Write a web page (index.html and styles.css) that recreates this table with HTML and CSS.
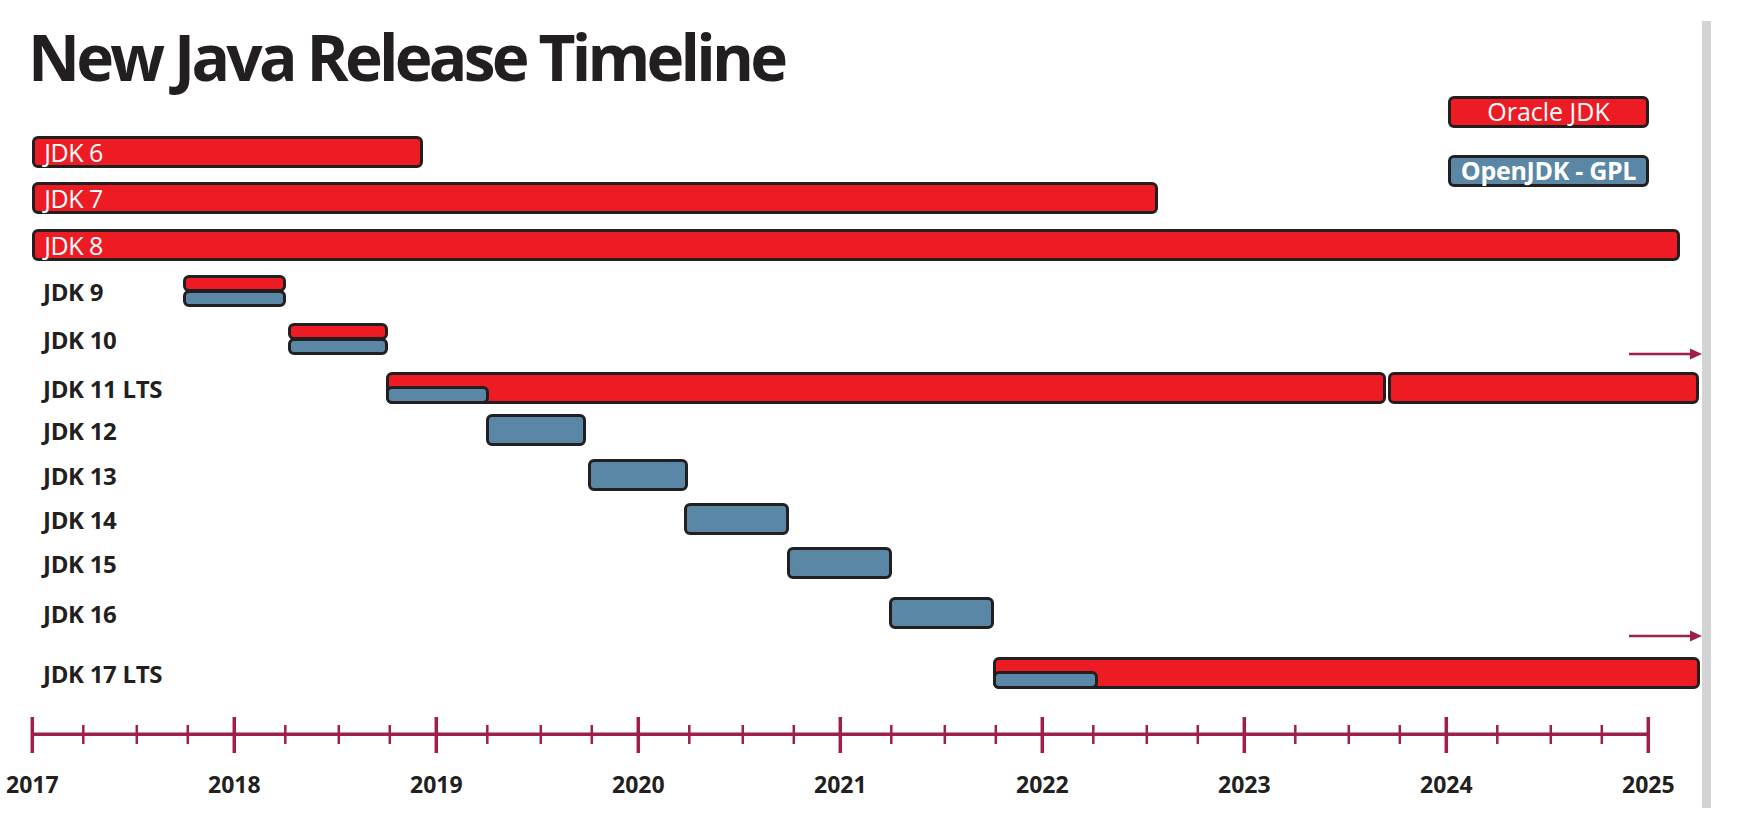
FILE: index.html
```html
<!DOCTYPE html>
<html lang="en">
<head>
<meta charset="utf-8">
<title>New Java Release Timeline</title>
<link rel="stylesheet" href="styles.css">
</head>
<body>
<div class="page">
  <main class="chart">
    <h1 class="title">New Java Release Timeline</h1>

    <div class="legend">
      <div class="key key-oracle">Oracle JDK</div>
      <div class="key key-open">OpenJDK - GPL</div>
    </div>

    <div class="rows">
      <div class="row">
        <div class="track">
          <div class="bar red" style="--s:0;--e:1.935"><span class="bar-text">JDK 6</span></div>
        </div>
      </div>
      <div class="row gap-14">
        <div class="track">
          <div class="bar red" style="--s:0;--e:5.571"><span class="bar-text">JDK 7</span></div>
        </div>
      </div>
      <div class="row gap-15">
        <div class="track">
          <div class="bar red" style="--s:0;--e:8.157"><span class="bar-text">JDK 8</span></div>
        </div>
      </div>
      <div class="row gap-14">
        <span class="label">JDK 9</span>
        <div class="track">
          <div class="stack" style="--s:0.745;--e:1.256">
            <div class="half red"></div>
            <div class="half blue"></div>
          </div>
        </div>
      </div>
      <div class="row gap-16">
        <span class="label">JDK 10</span>
        <div class="track">
          <div class="stack" style="--s:1.264;--e:1.762">
            <div class="half red"></div>
            <div class="half blue"></div>
          </div>
        </div>
      </div>
      <div class="row gap-17">
        <span class="label">JDK 11 LTS</span>
        <div class="track">
          <div class="bar red" style="--s:1.750;--e:6.701">
            <div class="sub blue" style="--s:1.750;--e:2.261"></div>
          </div>
          <div class="bar red" style="--s:6.711;--e:8.251"></div>
        </div>
        <svg class="arrow arrow-11" width="73" height="12" viewBox="0 0 73 12" aria-hidden="true">
          <line x1="0" y1="6" x2="63" y2="6" />
          <polygon points="61,0.5 73,6 61,11.5" />
        </svg>
      </div>
      <div class="row gap-10">
        <span class="label">JDK 12</span>
        <div class="track">
          <div class="bar blue" style="--s:2.246;--e:2.740"></div>
        </div>
      </div>
      <div class="row gap-13">
        <span class="label">JDK 13</span>
        <div class="track">
          <div class="bar blue" style="--s:2.752;--e:3.246"></div>
        </div>
      </div>
      <div class="row gap-12">
        <span class="label">JDK 14</span>
        <div class="track">
          <div class="bar blue" style="--s:3.225;--e:3.747"></div>
        </div>
      </div>
      <div class="row gap-12">
        <span class="label">JDK 15</span>
        <div class="track">
          <div class="bar blue" style="--s:3.736;--e:4.254"></div>
        </div>
      </div>
      <div class="row gap-18">
        <span class="label">JDK 16</span>
        <div class="track">
          <div class="bar blue" style="--s:4.241;--e:4.761"></div>
        </div>
      </div>
      <div class="row gap-28">
        <span class="label">JDK 17 LTS</span>
        <div class="track">
          <div class="bar red" style="--s:4.757;--e:8.256">
            <div class="sub blue" style="--s:4.757;--e:5.274"></div>
          </div>
        </div>
        <svg class="arrow arrow-17" width="73" height="12" viewBox="0 0 73 12" aria-hidden="true">
          <line x1="0" y1="6" x2="63" y2="6" />
          <polygon points="61,0.5 73,6 61,11.5" />
        </svg>
      </div>
    </div>

    <svg class="axis" width="1702" height="38" viewBox="0 0 1702 38" aria-hidden="true">
      <line class="axis-line" x1="32.3" y1="18.3" x2="1648.3" y2="18.3" />
      <path class="tick-major" d="M32.3 1V37M234.3 1V37M436.3 1V37M638.3 1V37M840.3 1V37M1042.3 1V37M1244.3 1V37M1446.3 1V37M1648.3 1V37" />
      <path class="tick-minor" d="M83.3 9V28M136.8 9V28M187.8 9V28M285.3 9V28M338.8 9V28M389.8 9V28M487.3 9V28M540.8 9V28M591.8 9V28M689.3 9V28M742.8 9V28M793.8 9V28M891.3 9V28M944.8 9V28M995.8 9V28M1093.3 9V28M1146.8 9V28M1197.8 9V28M1295.3 9V28M1348.8 9V28M1399.8 9V28M1497.3 9V28M1550.8 9V28M1601.8 9V28" />
    </svg>

    <div class="years">
      <div class="year"><span>2017</span></div>
      <div class="year"><span>2018</span></div>
      <div class="year"><span>2019</span></div>
      <div class="year"><span>2020</span></div>
      <div class="year"><span>2021</span></div>
      <div class="year"><span>2022</span></div>
      <div class="year"><span>2023</span></div>
      <div class="year"><span>2024</span></div>
      <div class="year"><span>2025</span></div>
    </div>
  </main>
  <div class="edge"></div>
</div>
</body>
</html>
```

FILE: styles.css
```css
* {
  box-sizing: border-box;
}

html, body {
  margin: 0;
  padding: 0;
  background: #ffffff;
}

body {
  width: 1738px;
  height: 824px;
  overflow: hidden;
  font-family: "Open Sans", "Liberation Sans", sans-serif;
  color: #231f20;
}

.page {
  display: flex;
  align-items: flex-start;
}

.chart {
  position: relative;
  width: 1702px;
  flex: none;
}

.edge {
  flex: none;
  width: 9px;
  height: 787px;
  margin-top: 21px;
  background: #d1d3d4;
}

.title {
  margin: 25px 0 0 28px;
  font-size: 64px;
  line-height: 64px;
  font-weight: 700;
  letter-spacing: -3.8px;
  white-space: nowrap;
}

/* Legend */
.legend {
  position: absolute;
  left: 1448px;
  top: 96px;
  display: flex;
  flex-direction: column;
  gap: 27px;
}

.key {
  width: 201px;
  height: 32px;
  border: 3px solid #231f20;
  border-radius: 6px;
  color: #ffffff;
  font-size: 25px;
  line-height: 25px;
  text-align: center;
  white-space: nowrap;
}

.key-oracle {
  background: #ed1c24;
  font-weight: 400;
}

.key-open {
  background: #5a87a6;
  font-weight: 700;
  letter-spacing: -0.3px;
}

/* Rows */
.rows {
  margin-top: 47px;
  display: flex;
  flex-direction: column;
}

.row {
  position: relative;
  height: 32px;
  display: grid;
}

.gap-10 { margin-top: 10px; }
.gap-12 { margin-top: 12px; }
.gap-13 { margin-top: 13px; }
.gap-14 { margin-top: 14px; }
.gap-15 { margin-top: 15px; }
.gap-16 { margin-top: 16px; }
.gap-17 { margin-top: 17px; }
.gap-18 { margin-top: 18px; }
.gap-28 { margin-top: 28px; }

.label {
  grid-area: 1 / 1;
  padding-left: 43px;
  padding-top: 1px;
  font-size: 24px;
  font-weight: 700;
  line-height: 32px;
  white-space: nowrap;
  letter-spacing: -0.3px;
}

.track {
  grid-area: 1 / 1;
  display: grid;
  padding-left: 32.3px;
}

.bar,
.stack {
  grid-area: 1 / 1;
  justify-self: start;
  height: 32px;
  margin-left: calc(var(--s) * 202px);
  width: calc((var(--e) - var(--s)) * 202px);
}

.bar {
  border: 3px solid #231f20;
  border-radius: 6px;
  display: flex;
  align-items: flex-end;
}

.red {
  background: #ed1c24;
}

.blue {
  background: #5a87a6;
}

.bar-text {
  align-self: flex-start;
  padding-left: 9px;
  color: #ffffff;
  font-size: 25px;
  line-height: 26px;
  white-space: nowrap;
  letter-spacing: -0.5px;
}

.sub {
  flex: none;
  height: 18px;
  margin: 0 0 -3px -3px;
  width: calc((var(--e) - var(--s)) * 202px);
  border: 3px solid #231f20;
  border-radius: 6px;
}

.stack {
  display: flex;
  flex-direction: column;
}

.half {
  height: 17px;
  border: 3px solid #231f20;
  border-radius: 6px;
}

.half + .half {
  margin-top: -2px;
}

/* Continuation arrows */
.arrow {
  position: absolute;
  right: 0;
  display: block;
}

.arrow line {
  stroke: #9e1f48;
  stroke-width: 2.6;
}

.arrow polygon {
  fill: #9e1f48;
}

.arrow-11 { top: -24px; }
.arrow-17 { top: -27px; }

/* Axis */
.axis {
  display: block;
  margin-top: 27px;
}

.axis-line {
  stroke: #9e1f48;
  stroke-width: 3.5;
}

.tick-major {
  stroke: #9e1f48;
  stroke-width: 3.5;
  fill: none;
}

.tick-minor {
  stroke: #9e1f48;
  stroke-width: 2.5;
  fill: none;
}

.years {
  display: flex;
  margin-top: 19px;
  padding-left: 32.3px;
}

.year {
  flex: none;
  width: 202px;
  display: flex;
}

.year:last-child {
  width: 0;
}

.year span {
  width: 0;
  display: flex;
  justify-content: center;
  font-size: 23px;
  font-weight: 700;
  line-height: 23px;
  white-space: nowrap;
}
```
